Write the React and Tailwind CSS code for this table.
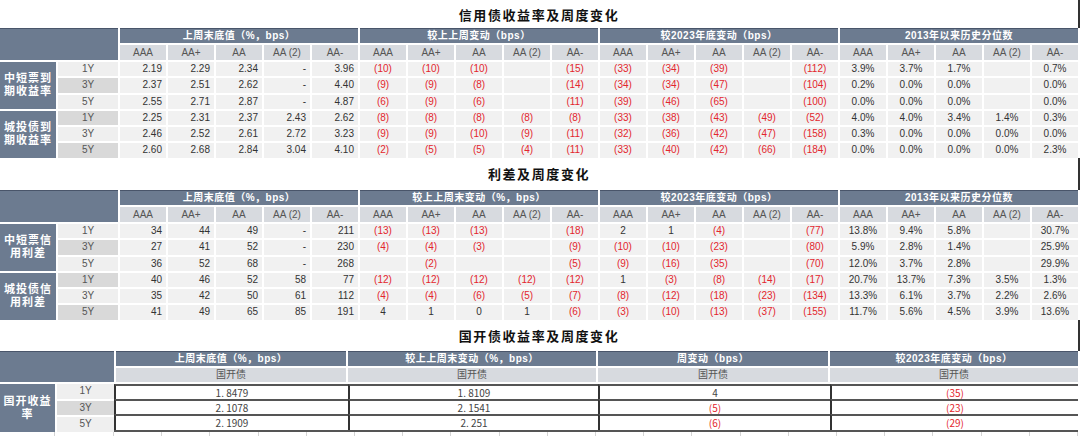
import React from "react";

const SUBS = ["AAA", "AA+", "AA", "AA (2)", "AA-"];
const TENORS = ["1Y", "3Y", "5Y", "1Y", "3Y", "5Y"];

const T1 = {
  title: "信用债收益率及周度变化",
  groups: ["上周末底值（%，bps）", "较上上周变动（bps）", "较2023年底变动（bps）", "2013年以来历史分位数"],
  labels: ["中短票到期收益率", "城投债到期收益率"],
  rows: [
    ["2.19", "2.29", "2.34", "-", "3.96", "(10)", "(10)", "(10)", "", "(15)", "(33)", "(34)", "(39)", "", "(112)", "3.9%", "3.7%", "1.7%", "", "0.7%"],
    ["2.37", "2.51", "2.62", "-", "4.40", "(9)", "(9)", "(8)", "", "(14)", "(34)", "(34)", "(47)", "", "(104)", "0.2%", "0.0%", "0.0%", "", "0.0%"],
    ["2.55", "2.71", "2.87", "-", "4.87", "(6)", "(9)", "(6)", "", "(11)", "(39)", "(46)", "(65)", "", "(100)", "0.0%", "0.0%", "0.0%", "", "0.0%"],
    ["2.25", "2.31", "2.37", "2.43", "2.62", "(8)", "(8)", "(8)", "(8)", "(8)", "(33)", "(38)", "(43)", "(49)", "(52)", "4.0%", "4.0%", "3.4%", "1.4%", "0.3%"],
    ["2.46", "2.52", "2.61", "2.72", "3.23", "(9)", "(9)", "(10)", "(9)", "(11)", "(32)", "(36)", "(42)", "(47)", "(158)", "0.3%", "0.0%", "0.0%", "0.0%", "0.0%"],
    ["2.60", "2.68", "2.84", "3.04", "4.10", "(2)", "(5)", "(5)", "(4)", "(11)", "(33)", "(40)", "(42)", "(66)", "(184)", "0.0%", "0.0%", "0.0%", "0.0%", "2.3%"],
  ],
};

const T2 = {
  title: "利差及周度变化",
  groups: ["上周末底值（%，bps）", "较上上周末变动（%，bps）", "较2023年底变动（bps）", "2013年以来历史分位数"],
  labels: ["中短票信用利差", "城投债信用利差"],
  rows: [
    ["34", "44", "49", "-", "211", "(13)", "(13)", "(13)", "", "(18)", "2", "1", "(4)", "", "(77)", "13.8%", "9.4%", "5.8%", "", "30.7%"],
    ["27", "41", "52", "-", "230", "(4)", "(4)", "(3)", "", "(9)", "(10)", "(10)", "(23)", "", "(80)", "5.9%", "2.8%", "1.4%", "", "25.9%"],
    ["36", "52", "68", "-", "268", "", "(2)", "", "", "(5)", "(9)", "(16)", "(35)", "", "(70)", "12.0%", "3.7%", "2.8%", "", "29.9%"],
    ["40", "46", "52", "58", "77", "(12)", "(12)", "(12)", "(12)", "(12)", "1", "(3)", "(8)", "(14)", "(17)", "20.7%", "13.7%", "7.3%", "3.5%", "1.3%"],
    ["35", "42", "50", "61", "112", "(4)", "(4)", "(6)", "(5)", "(7)", "(8)", "(12)", "(18)", "(23)", "(134)", "13.3%", "6.1%", "3.7%", "2.2%", "2.6%"],
    ["41", "49", "65", "85", "191", "4", "1", "0", "1", "(6)", "(3)", "(10)", "(13)", "(37)", "(155)", "11.7%", "5.6%", "4.5%", "3.9%", "13.6%"],
  ],
};

const T3 = {
  title: "国开债收益率及周度变化",
  groups: ["上周末底值（%，bps）", "较上上周末变动（%，bps）", "周变动（bps）", "较2023年底变动（bps）"],
  rows: [
    ["1. 8479", "1. 8109", "4", "(35)"],
    ["2. 1078", "2. 1541", "(5)", "(23)"],
    ["2. 1909", "2. 251", "(6)", "(29)"],
  ],
};

const FONT = "font-['Liberation_Sans','Noto_Sans_CJK_SC',sans-serif]";

function Title({ text, h }) {
  return (
    <div className={`${h} w-full flex items-center justify-center border-r-2 border-[#333]`}>
      <span className="font-['Noto_Sans_CJK_SC',sans-serif] font-bold text-[13px] tracking-[1.6px] text-[#111] leading-none">
        {text}
      </span>
    </div>
  );
}

function BondTable({ data }) {
  return (
    <div className="w-[1078px] grid grid-cols-[56px_60px_repeat(20,46px)] grid-rows-[15px_15px_repeat(6,14.25px)] gap-[2px]">
      <div className="col-span-2 row-span-2 bg-[#6c7b90] border-t border-[#49556a]" />
      {data.groups.map((g) => (
        <div
          key={g}
          className="col-span-5 bg-[#6c7b90] border-t border-[#49556a] flex items-center justify-center text-white text-[10px] font-bold tracking-[0.5px] leading-none"
        >
          {g}
        </div>
      ))}
      {data.groups.map((g) =>
        SUBS.map((s) => (
          <div key={g + s} className="bg-[#d7dadf] flex items-center justify-center text-[#555] text-[10px] leading-none">
            {s}
          </div>
        ))
      )}
      {data.rows.map((row, ri) => (
        <React.Fragment key={ri}>
          {ri % 3 === 0 && (
            <div className="row-span-3 bg-[#6c7b90] flex items-center justify-center px-[2px] text-center text-white text-[11px] font-bold tracking-[1px] leading-[13px]">
              {data.labels[ri / 3]}
            </div>
          )}
          <div
            className={`${ri % 2 === 0 ? "bg-[#efefef]" : "bg-[#d9d9d9]"} flex items-center justify-center text-[#555] text-[10px] leading-none`}
          >
            {TENORS[ri]}
          </div>
          {row.map((v, ci) => (
            <div
              key={ci}
              className={`bg-[#f1f1f1] flex items-center ${ci < 5 ? "justify-end pr-[4px]" : "justify-center"} ${
                v.startsWith("(") ? "text-[#e3262d]" : "text-[#333]"
              } text-[10px] leading-none`}
            >
              {v}
            </div>
          ))}
        </React.Fragment>
      ))}
    </div>
  );
}

function GkTable({ data }) {
  return (
    <div className="w-[1078px]">
      <div className="grid grid-cols-[55px_57px_230px_248px_230px_248px] grid-rows-[14.5px_14.5px_14.5px_14.5px_14.5px] gap-[2px]">
        <div className="col-start-1 col-span-2 row-start-1 row-span-2 bg-[#6c7b90] border-t border-[#49556a]" />
        {data.groups.map((g, i) => (
          <div
            key={g}
            className={`row-start-1 ${["col-start-3", "col-start-4", "col-start-5", "col-start-6"][i]} bg-[#6c7b90] border-t border-[#49556a] flex items-center justify-center text-white text-[10px] font-bold tracking-[0.5px] leading-none`}
          >
            {g}
          </div>
        ))}
        {data.groups.map((g, i) => (
          <div
            key={g + "s"}
            className={`row-start-2 ${["col-start-3", "col-start-4", "col-start-5", "col-start-6"][i]} bg-[#d7dadf] flex items-center justify-center text-[#555] text-[10px] leading-none`}
          >
            国开债
          </div>
        ))}
        <div className="col-start-1 row-start-3 row-span-3 bg-[#6c7b90] flex items-center justify-center px-[2px] text-center text-white text-[11px] font-bold tracking-[1px] leading-[13px]">
          国开收益率
        </div>
        {["1Y", "3Y", "5Y"].map((t, i) => (
          <div
            key={t}
            className={`col-start-2 ${["row-start-3", "row-start-4", "row-start-5"][i]} ${
              i === 1 ? "bg-[#d9d9d9]" : "bg-[#efefef]"
            } flex items-center justify-center text-[#555] text-[10px] leading-none`}
          >
            {t}
          </div>
        ))}
        <div className="col-start-3 col-span-4 row-start-3 row-span-3 -ml-[2px] grid grid-cols-[234px_250px_232px_248px] grid-rows-3 border-b-2 border-[#555] bg-white">
          {data.rows.map((row, ri) =>
            row.map((v, ci) => (
              <div
                key={ri + "-" + ci}
                className={`border-t-2 border-t-[#555] border-l-2 border-l-[#333] flex items-center justify-center font-['Noto_Sans_CJK_SC',sans-serif] text-[10px] leading-none ${
                  v.startsWith("(") ? "text-[#e3262d]" : "text-[#444]"
                }`}
              >
                {v}
              </div>
            ))
          )}
        </div>
      </div>
      <div className="grid grid-cols-[55px_59px_repeat(20,1fr)] h-[5px]">
        {Array.from({ length: 22 }).map((_, i) => (
          <div key={i} className="border-r border-[#d4d4d4]" />
        ))}
      </div>
    </div>
  );
}

export default function App() {
  return (
    <div className={`w-[1080px] h-[436px] overflow-hidden bg-white ${FONT}`}>
      <Title text={T1.title} h="h-[28px]" />
      <BondTable data={T1} />
      <Title text={T2.title} h="h-[32.5px]" />
      <BondTable data={T2} />
      <Title text={T3.title} h="h-[31.5px]" />
      <GkTable data={T3} />
    </div>
  );
}
